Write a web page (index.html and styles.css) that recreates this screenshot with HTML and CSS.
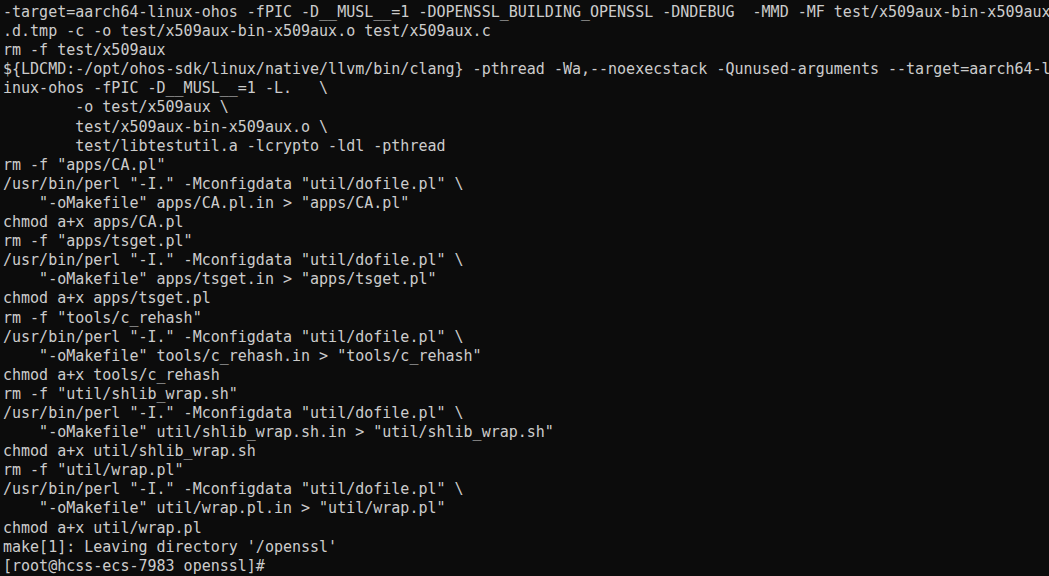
FILE: index.html
```html
<!DOCTYPE html>
<html>
<head>
<meta charset="utf-8">
<link rel="stylesheet" href="styles.css">
</head>
<body>
<pre class="term">-target=aarch64-linux-ohos -fPIC -D__MUSL__=1 -DOPENSSL_BUILDING_OPENSSL -DNDEBUG  -MMD -MF test/x509aux-bin-x509aux
.d.tmp -c -o test/x509aux-bin-x509aux.o test/x509aux.c
rm -f test/x509aux
${LDCMD:-/opt/ohos-sdk/linux/native/llvm/bin/clang} -pthread -Wa,--noexecstack -Qunused-arguments --target=aarch64-l
inux-ohos -fPIC -D__MUSL__=1 -L.   \
        -o test/x509aux \
        test/x509aux-bin-x509aux.o \
        test/libtestutil.a -lcrypto -ldl -pthread
rm -f "apps/CA.pl"
/usr/bin/perl "-I." -Mconfigdata "util/dofile.pl" \
    "-oMakefile" apps/CA.pl.in &gt; "apps/CA.pl"
chmod a+x apps/CA.pl
rm -f "apps/tsget.pl"
/usr/bin/perl "-I." -Mconfigdata "util/dofile.pl" \
    "-oMakefile" apps/tsget.in &gt; "apps/tsget.pl"
chmod a+x apps/tsget.pl
rm -f "tools/c_rehash"
/usr/bin/perl "-I." -Mconfigdata "util/dofile.pl" \
    "-oMakefile" tools/c_rehash.in &gt; "tools/c_rehash"
chmod a+x tools/c_rehash
rm -f "util/shlib_wrap.sh"
/usr/bin/perl "-I." -Mconfigdata "util/dofile.pl" \
    "-oMakefile" util/shlib_wrap.sh.in &gt; "util/shlib_wrap.sh"
chmod a+x util/shlib_wrap.sh
rm -f "util/wrap.pl"
/usr/bin/perl "-I." -Mconfigdata "util/dofile.pl" \
    "-oMakefile" util/wrap.pl.in &gt; "util/wrap.pl"
chmod a+x util/wrap.pl
make[1]: Leaving directory '/openssl'
[root@hcss-ecs-7983 openssl]#</pre>
</body>
</html>
```

FILE: styles.css
```css
html, body {
  margin: 0;
  padding: 0;
  background: #0c0c0c;
  height: 100%;
  overflow: hidden;
}
.term {
  margin: 0;
  padding: 3px 0 0 3px;
  font-family: "DejaVu Sans Mono", "Liberation Mono", monospace;
  font-size: 15px;
  line-height: 19.1px;
  color: #cccccc;
  white-space: pre;
}
```
